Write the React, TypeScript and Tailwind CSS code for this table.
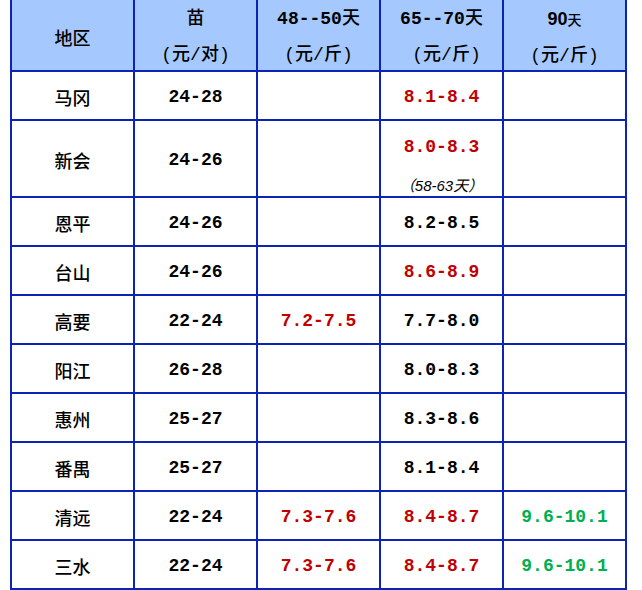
import React from "react";

type Tone = "black" | "red" | "green";
type Val = { t: string; c?: Tone } | null;

type Row = {
  area: string;
  seed: string;
  d48: Val;
  d65: Val;
  d90: Val;
  note?: string;
  tall?: boolean;
};

const rows: Row[] = [
  { area: "马冈", seed: "24-28", d48: null, d65: { t: "8.1-8.4", c: "red" }, d90: null },
  { area: "新会", seed: "24-26", d48: null, d65: { t: "8.0-8.3", c: "red" }, d90: null, note: "（58-63天）", tall: true },
  { area: "恩平", seed: "24-26", d48: null, d65: { t: "8.2-8.5" }, d90: null },
  { area: "台山", seed: "24-26", d48: null, d65: { t: "8.6-8.9", c: "red" }, d90: null },
  { area: "高要", seed: "22-24", d48: { t: "7.2-7.5", c: "red" }, d65: { t: "7.7-8.0" }, d90: null },
  { area: "阳江", seed: "26-28", d48: null, d65: { t: "8.0-8.3" }, d90: null },
  { area: "惠州", seed: "25-27", d48: null, d65: { t: "8.3-8.6" }, d90: null },
  { area: "番禺", seed: "25-27", d48: null, d65: { t: "8.1-8.4" }, d90: null },
  { area: "清远", seed: "22-24", d48: { t: "7.3-7.6", c: "red" }, d65: { t: "8.4-8.7", c: "red" }, d90: { t: "9.6-10.1", c: "green" } },
  { area: "三水", seed: "22-24", d48: { t: "7.3-7.6", c: "red" }, d65: { t: "8.4-8.7", c: "red" }, d90: { t: "9.6-10.1", c: "green" } },
];

const toneClass: Record<Tone, string> = {
  black: "text-black",
  red: "text-[#c00000]",
  green: "text-[#00b050]",
};

const cell =
  "flex flex-col items-center justify-center border-r-2 border-b-2 border-[#0b24b3]";
const mono = "font-['Liberation_Mono','Noto_Sans_CJK_SC',monospace] text-[18px] font-bold";
const cjk = "font-['Noto_Sans_CJK_SC',sans-serif] text-[18px] font-medium";
const head =
  "font-['Liberation_Mono','Noto_Sans_CJK_SC',monospace] text-[18px] font-medium leading-[36px]";

function Price({ v }: { v: Val }) {
  if (!v) return null;
  return <span className={`${mono} ${toneClass[v.c ?? "black"]}`}>{v.t}</span>;
}

export default function App() {
  return (
    <div className="w-[642px] h-[590px] bg-white pl-[10px] overflow-hidden">
      <div className="grid grid-cols-[repeat(5,123px)] w-[617px] border-l-2 border-[#0b24b3] text-black">
        {/* Header */}
        <div className={`${cell} h-[72px] bg-[#a5c8fe] pt-1`}>
          <span className={cjk}>地区</span>
        </div>
        <div className={`${cell} h-[72px] bg-[#a5c8fe] pt-1 ${head}`}>
          <span>苗</span>
          <span>(元/对)</span>
        </div>
        <div className={`${cell} h-[72px] bg-[#a5c8fe] pt-1 ${head}`}>
          <span className="font-bold">48--50<span className="font-medium">天</span></span>
          <span>(元/斤)</span>
        </div>
        <div className={`${cell} h-[72px] bg-[#a5c8fe] pt-1 ${head}`}>
          <span className="font-bold">65--70<span className="font-medium">天</span></span>
          <span className="pl-[10px]">(元/斤)</span>
        </div>
        <div className={`${cell} h-[72px] bg-[#a5c8fe] pt-1 ${head}`}>
          <span>
            <span className="font-['Liberation_Sans',sans-serif] font-bold">90</span>
            <span className="font-['Noto_Sans_CJK_SC',sans-serif] text-[14px]">天</span>
          </span>
          <span>(元/斤)</span>
        </div>

        {/* Body */}
        {rows.map((r) => {
          const h = r.tall ? "h-[77px]" : "h-[49px]";
          return (
            <React.Fragment key={r.area}>
              <div className={`${cell} ${h} pt-1`}>
                <span className={cjk}>{r.area}</span>
              </div>
              <div className={`${cell} ${h} pt-1`}>
                <span className={mono}>{r.seed}</span>
              </div>
              <div className={`${cell} ${h} pt-1`}>
                <Price v={r.d48} />
              </div>
              <div className={`${cell} ${h} ${r.note ? "pt-[9px] gap-[17px]" : "pt-1"}`}>
                <Price v={r.d65} />
                {r.note && (
                  <span className="font-['Liberation_Sans','Noto_Sans_CJK_SC',sans-serif] text-[15px] italic leading-none">
                    {r.note}
                  </span>
                )}
              </div>
              <div className={`${cell} ${h} pt-1`}>
                <Price v={r.d90} />
              </div>
            </React.Fragment>
          );
        })}
      </div>
    </div>
  );
}
